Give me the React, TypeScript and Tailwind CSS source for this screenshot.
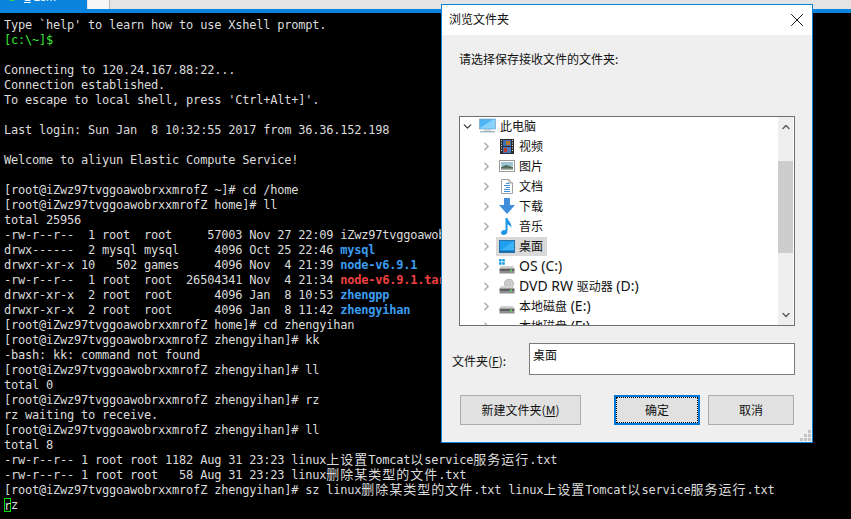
import React from "react";
import { X, ChevronRight, ChevronDown, ChevronUp } from "lucide-react";

const ROOT = "[root@iZwz97tvggoawobrxxmrofZ";
const CJK = /([\u4e00-\u9fff]+)/;

// terminal cell is 7px wide, CJK glyphs take two cells
const TermText = ({ text }: { text: string }) => (
  <>
    {text.split(CJK).map((part, i) =>
      CJK.test(part) ? (
        <span key={i} className="font-['Noto_Sans_CJK_SC',sans-serif] text-[13px] leading-[0] tracking-[1px]">
          {part}
        </span>
      ) : (
        <span key={i}>{part}</span>
      ),
    )}
  </>
);

const Line = ({ children, className }: { children?: React.ReactNode; className?: string }) => (
  <div className={`h-[15px] leading-[15px] whitespace-pre ${className ?? ""}`}>{children}</div>
);

const lines: string[] = [
  "Type `help' to learn how to use Xshell prompt.",
  "@green",
  "",
  "Connecting to 120.24.167.88:22...",
  "Connection established.",
  "To escape to local shell, press 'Ctrl+Alt+]'.",
  "",
  "Last login: Sun Jan  8 10:32:55 2017 from 36.36.152.198",
  "",
  "Welcome to aliyun Elastic Compute Service!",
  "",
  `${ROOT} ~]# cd /home`,
  `${ROOT} home]# ll`,
  "total 25956",
  "-rw-r--r--  1 root  root     57003 Nov 27 22:09 iZwz97tvggoawobrxxmrofZ",
  "drwx------  2 mysql mysql     4096 Oct 25 22:46 |mysql",
  "drwxr-xr-x 10   502 games     4096 Nov  4 21:39 |node-v6.9.1",
  "-rw-r--r--  1 root  root  26504341 Nov  4 21:34 ^node-v6.9.1.tar.gz",
  "drwxr-xr-x  2 root  root      4096 Jan  8 10:53 |zhengpp",
  "drwxr-xr-x  2 root  root      4096 Jan  8 11:42 |zhengyihan",
  `${ROOT} home]# cd zhengyihan`,
  `${ROOT} zhengyihan]# kk`,
  "-bash: kk: command not found",
  `${ROOT} zhengyihan]# ll`,
  "total 0",
  `${ROOT} zhengyihan]# rz`,
  "rz waiting to receive.",
  `${ROOT} zhengyihan]# ll`,
  "total 8",
  "-rw-r--r-- 1 root root 1182 Aug 31 23:23 linux上设置Tomcat以service服务运行.txt",
  "-rw-r--r-- 1 root root   58 Aug 31 23:23 linux删除某类型的文件.txt",
  `${ROOT} zhengyihan]# sz linux删除某类型的文件.txt linux上设置Tomcat以service服务运行.txt`,
];

const Terminal = () => (
  <div className="flex-1 bg-black pt-[5px] pl-[4px] text-[#dcdcdc] font-['DejaVu_Sans_Mono',monospace] text-[12px] tracking-[-0.22px] overflow-hidden">
    {lines.map((l, i) => {
      if (l === "@green") {
        return (
          <Line key={i} className="text-[#35e835]">
            [c:\~]$
          </Line>
        );
      }
      const blue = l.indexOf("|");
      const red = l.indexOf("^");
      if (blue > 0) {
        return (
          <Line key={i}>
            {l.slice(0, blue)}
            <span className="font-bold text-[#3c9cf0]">{l.slice(blue + 1)}</span>
          </Line>
        );
      }
      if (red > 0) {
        return (
          <Line key={i}>
            {l.slice(0, red)}
            <span className="font-bold text-[#f04040]">{l.slice(red + 1)}</span>
          </Line>
        );
      }
      return (
        <Line key={i}>
          <TermText text={l} />
        </Line>
      );
    })}
    <Line>
      <span className="inline-block h-[14px] w-[7px] leading-[14px] align-top border border-[#00e000]">
        <span className="-ml-[1px]">r</span>
      </span>
      z
    </Line>
  </div>
);

const TopBar = () => (
  <div className="shrink-0">
    <div className="h-[9px] bg-[#e4e4e4] flex overflow-hidden">
      <div className="w-[87px] bg-[#0a84dc] flex items-start pl-[8px] gap-[8px] text-white text-[12px] leading-[12px] font-['Liberation_Sans',sans-serif]">
        <span className="w-[8px] h-[8px] rounded-full bg-[#3ddc3d] -mt-[7px]" />
        <span className="-mt-[9px] whitespace-pre">
          <span className="underline">1</span> zsm
        </span>
      </div>
      <div className="w-[1px]" />
      <div className="w-[22px] bg-[#f6f6f6] border-r border-[#b8b8b8]" />
    </div>
    <div className="h-[4px] bg-[#0a84dc]" />
  </div>
);

const MonitorIcon = () => (
  <svg width="17" height="16" viewBox="0 0 17 16">
    <rect x="0.5" y="1" width="16" height="10" fill="#4fb4f2" stroke="#7a9db8" strokeWidth="0.6" />
    <path d="M1 10 L14 1.5 H16 V10.5 H1Z" fill="#86d2fb" />
    <rect x="5" y="11" width="7" height="2" fill="#c9d4dc" />
    <rect x="1" y="13" width="15" height="1.5" fill="#a9b8c4" />
  </svg>
);

const VideoIcon = () => (
  <svg width="14" height="15" viewBox="0 0 14 15">
    <rect width="14" height="15" fill="#2b2b2b" />
    <rect x="3" y="1" width="8" height="6" fill="#3a6fb8" />
    <rect x="3" y="8" width="8" height="6" fill="#4a78c0" />
    <rect x="6" y="2" width="4" height="4" fill="#b8762c" />
    <rect x="4" y="9" width="3" height="4" fill="#c23a2c" />
    <path d="M1 1.5h1M1 4h1M1 6.5h1M1 9h1M1 11.5h1M12 1.5h1M12 4h1M12 6.5h1M12 9h1M12 11.5h1" stroke="#e6e6e6" strokeWidth="1" />
  </svg>
);

const PictureIcon = () => (
  <svg width="16" height="12" viewBox="0 0 16 12">
    <rect x="0.5" y="0.5" width="15" height="11" fill="#fff" stroke="#9a9a9a" />
    <rect x="2" y="2" width="12" height="4" fill="#9fc4d6" />
    <path d="M2 7 L7 5 L14 7 V10 H2Z" fill="#4f6d5a" />
    <rect x="2" y="8.5" width="12" height="1.5" fill="#a8b4a8" />
  </svg>
);

const DocIcon = () => (
  <svg width="12" height="15" viewBox="0 0 12 15">
    <path d="M0.5 0.5 H8 L11.5 4 V14.5 H0.5Z" fill="#fff" stroke="#a0a0a0" />
    <path d="M8 0.5 V4 H11.5" fill="#e0e0e0" stroke="#a0a0a0" />
    <path d="M5 4.5h3M3 6.5h6M5 8.5h4M3 10.5h6M3 12.5h6" stroke="#3e8fd6" strokeWidth="1" />
  </svg>
);

const DownloadIcon = () => (
  <svg width="16" height="16" viewBox="0 0 16 16">
    <path d="M5 0 H11 V7 H16 L8 16 L0 7 H5Z" fill="#3f8fdc" />
  </svg>
);

const MusicIcon = () => (
  <svg width="12" height="17" viewBox="0 0 12 17">
    <path d="M4.5 0 H6.5 C7 3 11 5 10.5 10 C10 8 8.5 7 6.5 6.5 V13.5 C6.5 15.5 4.5 17 2.5 17 C1 17 0 16 0 14.8 C0 13 2.2 11.7 4.5 12.2Z" fill="#1e96e6" />
  </svg>
);

const DesktopIcon = () => (
  <svg width="16" height="13" viewBox="0 0 16 13">
    <rect x="0.5" y="0.5" width="15" height="12" fill="#1ea0f0" stroke="#2a6fa8" />
    <path d="M1 11 L15 1 V12 H1Z" fill="#3db4f8" />
    <rect x="1" y="10.5" width="14" height="1.5" fill="#0f6cb0" />
  </svg>
);

const Drive = ({ win, disc }: { win?: boolean; disc?: boolean }) => (
  <svg width="16" height="15" viewBox="0 0 16 15">
    {win && <path d="M0 0h2.6v2.6H0zM3.2 0h2.6v2.6H3.2zM0 3.2h2.6v2.6H0zM3.2 3.2h2.6v2.6H3.2z" fill="#18a0e8" />}
    {disc && (
      <>
        <circle cx="10" cy="4.5" r="4.5" fill="#cfcfcf" stroke="#8d8d8d" strokeWidth="0.6" />
        <circle cx="10" cy="4.5" r="1.3" fill="#f4f4f4" stroke="#8d8d8d" strokeWidth="0.5" />
      </>
    )}
    <path d="M2 7 H14 L15.5 9.5 H0.5Z" fill="#d0d0d0" />
    <rect x="0.5" y="9.5" width="15" height="2.5" fill="#606060" />
    <rect x="0.5" y="12" width="15" height="2.5" fill="#8f8f8f" />
    <rect x="11" y="10.5" width="2" height="2" fill="#5fd35f" />
  </svg>
);

// latin part of a tree label is drawn larger than the CJK part, as in the picture
const Label = ({ text }: { text: string }) => (
  <span className="ml-[4px] whitespace-pre">
    {text.split(CJK).map((part, i) =>
      CJK.test(part) ? (
        <span key={i}>{part}</span>
      ) : (
        <span key={i} className="font-['Noto_Sans',sans-serif] text-[14px] leading-[0]">
          {part}
        </span>
      ),
    )}
  </span>
);

const TreeRow = ({
  icon,
  label,
  selected,
  open,
  indent,
}: {
  icon: React.ReactNode;
  label: string;
  selected?: boolean;
  open?: boolean;
  indent?: boolean;
}) => (
  <div className="h-[20px] shrink-0 flex items-center">
    <div className={`w-[14px] flex justify-center ${indent ? "ml-[19px]" : "ml-0"}`}>
      {open ? (
        <ChevronDown size={13} strokeWidth={2.4} className="text-[#404040]" />
      ) : (
        <ChevronRight size={13} strokeWidth={2.4} className="text-[#a6a6a6]" />
      )}
    </div>
    <div className={`h-[19px] ml-[3px] flex items-center ${selected ? "bg-[#d9d9d9]" : ""} pl-[2px] pr-[4px]`}>
      <div className="w-[17px] flex justify-center">{icon}</div>
      <Label text={label} />
    </div>
  </div>
);

const Tree = () => (
  <div className="mx-[17px] mt-[49px] h-[210px] border border-[#6f6f6f] bg-white flex overflow-hidden">
    <div className="flex-1 flex flex-col overflow-hidden -mt-[1px]">
      <TreeRow icon={<MonitorIcon />} label="此电脑" open />
      <TreeRow indent icon={<VideoIcon />} label="视频" />
      <TreeRow indent icon={<PictureIcon />} label="图片" />
      <TreeRow indent icon={<DocIcon />} label="文档" />
      <TreeRow indent icon={<DownloadIcon />} label="下载" />
      <TreeRow indent icon={<MusicIcon />} label="音乐" />
      <TreeRow indent selected icon={<DesktopIcon />} label="桌面" />
      <TreeRow indent icon={<Drive win />} label="OS (C:)" />
      <TreeRow indent icon={<Drive disc />} label="DVD RW 驱动器 (D:)" />
      <TreeRow indent icon={<Drive />} label="本地磁盘 (E:)" />
      <TreeRow indent icon={<Drive />} label="本地磁盘 (F:)" />
    </div>
    <div className="w-[15px] mr-[1px] bg-[#efefef] flex flex-col items-center">
      <ChevronUp size={12} strokeWidth={3} className="text-[#606060] mt-[4px] shrink-0" />
      <div className="mt-[28px] w-full h-[92px] bg-[#cdcdcd] shrink-0" />
      <ChevronDown size={12} strokeWidth={3} className="text-[#606060] mt-auto mb-[4px] shrink-0" />
    </div>
  </div>
);

const Button = ({ children, className }: { children: React.ReactNode; className?: string }) => (
  <div className={`h-[30px] flex items-center justify-center bg-[#e1e1e1] border border-[#adadad] ${className ?? ""}`}>
    {children}
  </div>
);

const Dialog = () => (
  <div className="absolute left-[441px] top-[4px] w-[372px] h-[439px] border border-[#0a84dc] bg-[#efefef] flex flex-col text-[12px] text-[#111] font-['Noto_Sans_CJK_SC',sans-serif]">
    <div className="h-[30px] shrink-0 bg-white flex items-center justify-between pl-[7px] pr-[4px]">
      <span className="-mt-[2px]">浏览文件夹</span>
      <X size={22} strokeWidth={1} className="text-black -mt-[1px]" />
    </div>
    <div className="h-[17px] mt-[15px] ml-[17px] leading-[17px]">请选择保存接收文件的文件夹:</div>
    <Tree />
    <div className="mt-[17px] h-[32px] flex items-center">
      <span className="ml-[10px] mt-[3px] w-[77px]">
        文件夹(<span className="underline">F</span>):
      </span>
      <div className="w-[266px] h-full border border-[#7a7a7a] bg-white pl-[3px] pt-[2px]">桌面</div>
    </div>
    <div className="mt-[20px] flex">
      <Button className="ml-[18px] w-[121px]">
        新建文件夹(<span className="underline">M</span>)
      </Button>
      <Button className="ml-[33px] w-[86px] !border-2 !border-[#0078d7] outline outline-1 outline-dotted -outline-offset-3 outline-black">
        确定
      </Button>
      <Button className="ml-[8px] w-[86px]">取消</Button>
    </div>
    <svg className="absolute right-[1px] bottom-[1px]" width="11" height="11" viewBox="0 0 11 11">
      <path d="M8 0h3v3H8zM4 4h3v3H4zM8 4h3v3H8zM0 8h3v3H0zM4 8h3v3H4zM8 8h3v3H8z" fill="#c4c4c4" />
    </svg>
  </div>
);

export default function App() {
  return (
    <div className="relative w-[851px] h-[519px] overflow-hidden flex flex-col bg-black">
      <TopBar />
      <Terminal />
      <Dialog />
    </div>
  );
}
